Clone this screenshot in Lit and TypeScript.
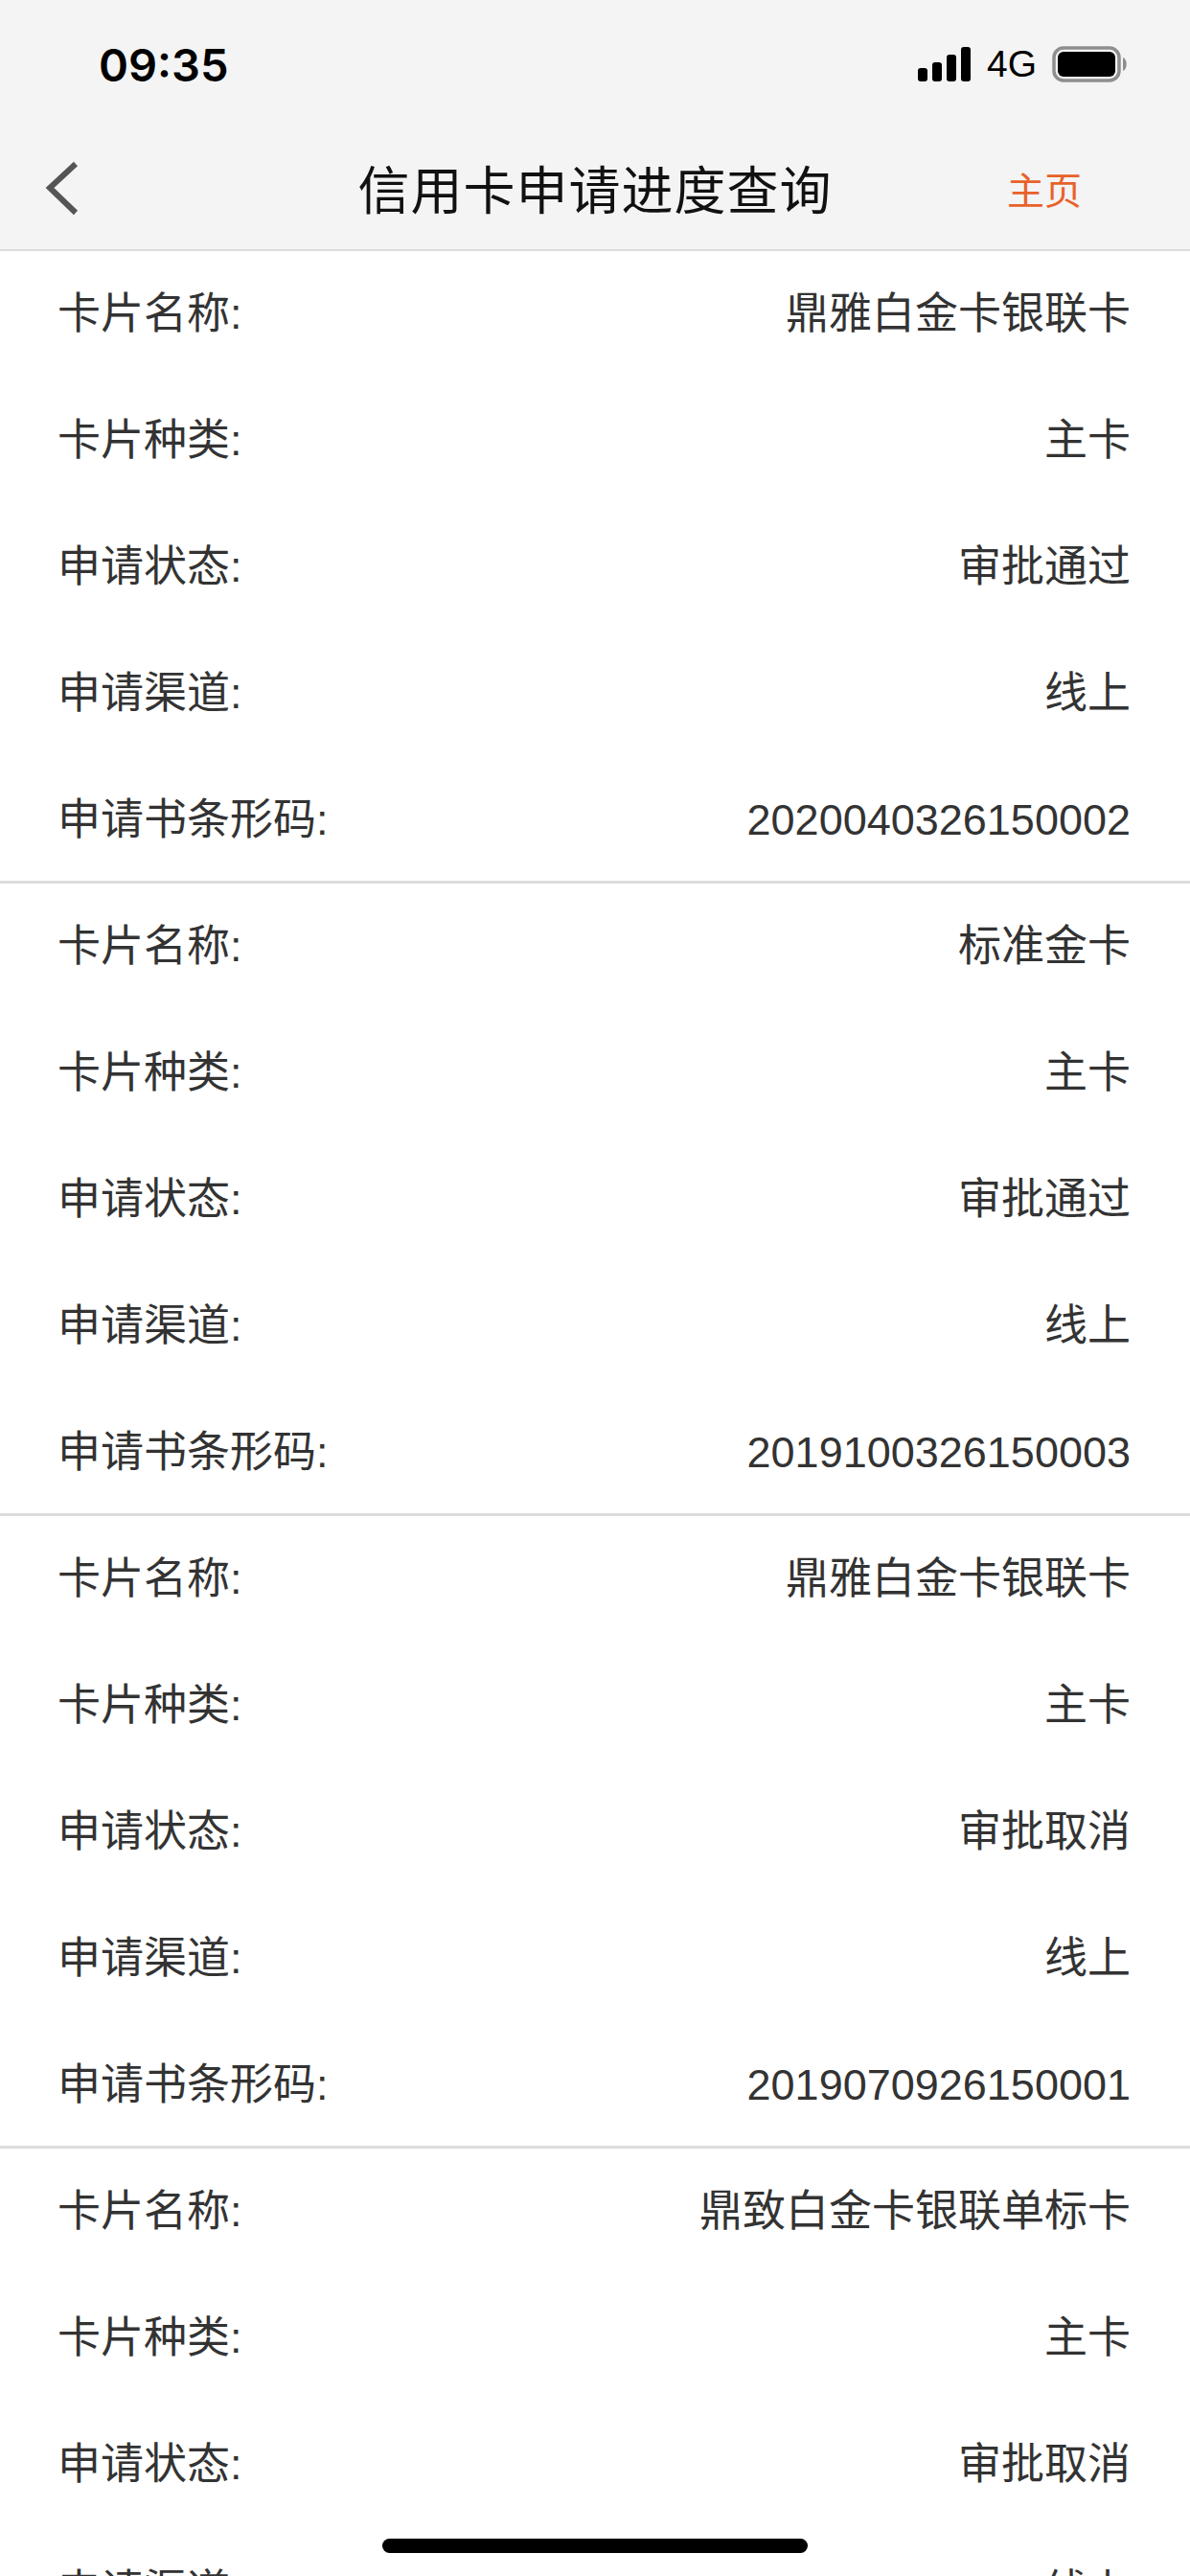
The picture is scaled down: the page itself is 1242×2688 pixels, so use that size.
import { LitElement, html, css } from "lit";
import { customElement } from "lit/decorators.js";

const LABELS = ["卡片名称:", "卡片种类:", "申请状态:", "申请渠道:", "申请书条形码:"];
const CARDS = [
  ["鼎雅白金卡银联卡", "主卡", "审批通过", "线上", "2020040326150002"],
  ["标准金卡", "主卡", "审批通过", "线上", "2019100326150003"],
  ["鼎雅白金卡银联卡", "主卡", "审批取消", "线上", "2019070926150001"],
  ["鼎致白金卡银联单标卡", "主卡", "审批取消", "线上", ""],
];

@customElement("app-root")
export class AppRoot extends LitElement {
  static styles = css`
    :host {
      display: block;
      position: relative;
      width: 1242px;
      height: 2688px;
      overflow: hidden;
      background: #fff;
      font-family: "Liberation Sans", "Noto Sans CJK SC", sans-serif;
    }
    .top { background: #f4f4f4; border-bottom: 2px solid #dcdcdc; }
    .status {
      height: 134px;
      display: flex;
      align-items: center;
      padding: 0 65px 0 103px;
      box-sizing: border-box;
      color: #000;
    }
    .time { font: 600 47px Inter, sans-serif; }
    .status-right { margin-left: auto; display: flex; align-items: center; }
    .net { font: 400 39px "Liberation Sans", sans-serif; margin: 0 16px 0 17px; }
    svg { display: block; }
    .nav {
      height: 126px;
      display: grid;
      grid-template-columns: 1fr auto 1fr;
      align-items: center;
    }
    .back { padding-left: 46px; }
    .title { font-size: 54px; color: #111; letter-spacing: 1px; padding-bottom: 3px; }
    .home { justify-self: end; padding: 0 113px 3px 0; font-size: 39px; color: #e8622a; }
    .card { height: 660px; box-sizing: border-box; border-bottom: 3px solid #dcdcdc; }
    .row {
      height: 132px;
      display: flex;
      justify-content: space-between;
      align-items: flex-start;
      padding: 34px 62px 0 60px;
      font-size: 45px;
      line-height: 64px;
      color: #333;
      box-sizing: border-box;
    }
    .bar {
      position: absolute;
      left: 399px;
      top: 2649px;
      width: 444px;
      height: 15px;
      border-radius: 8px;
      background: #000;
    }
  `;

  render() {
    return html`
      <div class="top">
        <div class="status">
          <span class="time">09:35</span>
          <div class="status-right">
            <svg width="55" height="36" viewBox="0 0 55 36" fill="#000">
              <rect x="0" y="22" width="10" height="14" rx="3"></rect>
              <rect x="15" y="16" width="10" height="20" rx="3"></rect>
              <rect x="30" y="8" width="10" height="28" rx="3"></rect>
              <rect x="45" y="0" width="10" height="36" rx="3"></rect>
            </svg>
            <span class="net">4G</span>
            <svg width="79" height="38" viewBox="0 0 79 38">
              <rect x="2" y="2" width="68" height="34" rx="10" fill="none" stroke="#8e8e8e" stroke-width="3.5"></rect>
              <rect x="6" y="6" width="60" height="26" rx="6" fill="#000"></rect>
              <path d="M74 12 C79 14 79 24 74 26 Z" fill="#8e8e8e"></path>
            </svg>
          </div>
        </div>
        <div class="nav">
          <div class="back">
            <svg width="40" height="60" viewBox="0 0 40 60">
              <path d="M33 4 L6 29 L33 55" fill="none" stroke="#555" stroke-width="6"></path>
            </svg>
          </div>
          <div class="title">信用卡申请进度查询</div>
          <div class="home">主页</div>
        </div>
      </div>
      ${CARDS.map(
        (c) => html`<div class="card">
          ${LABELS.map(
            (l, i) => html`<div class="row"><span>${l}</span><span>${c[i]}</span></div>`
          )}
        </div>`
      )}
      <div class="bar"></div>
    `;
  }
}
